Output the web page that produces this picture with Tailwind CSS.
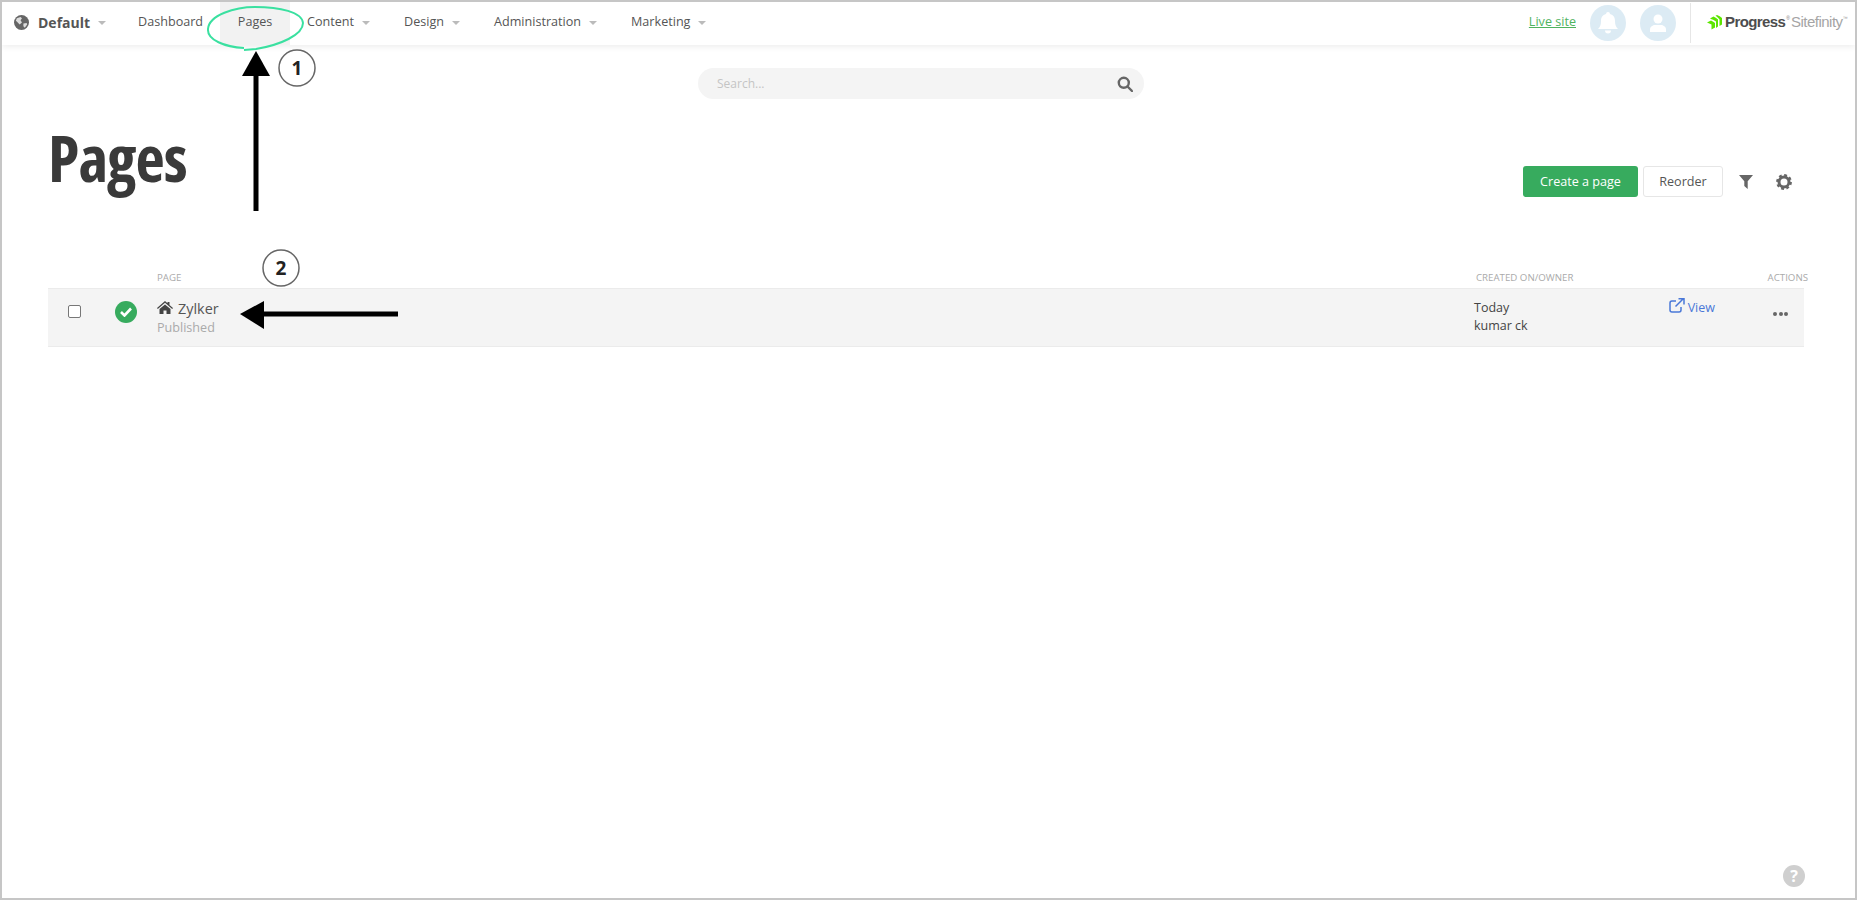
<!DOCTYPE html>
<html lang="en">
<head>
<meta charset="utf-8">
<title>Pages</title>
<script src="https://cdn.jsdelivr.net/npm/@tailwindcss/browser@4"></script>
</head>
<body class="bg-white font-['Open_Sans',sans-serif] text-[#555]">
<div class="relative w-[1857px] h-[900px] overflow-hidden border-2 border-[#c6c6c6] flex flex-col">

  <!-- top nav -->
  <nav class="h-[43px] shrink-0 flex items-center bg-white shadow-[0_2px_6px_rgba(0,0,0,0.07)] text-[12.6px] pl-3 pb-[2px]">
    <svg class="w-[15px] h-[15px]" viewBox="0 0 16 16"><circle cx="8" cy="8" r="8" fill="#666"/><path d="M3 3.500 7 2l1.500 1.500L7 5.500 8.500 8 6 10 3.500 7.500 2 6zM10 9l3.500-.5L14 10l-2.500 3.500L10 12z" fill="#ddd"/></svg>
    <span class="ml-[9px] font-bold text-[14px]">Default</span>
    <span class="ml-[8px] w-0 h-0 border-x-4 border-x-transparent border-t-[4px] border-t-[#bbb]"></span>
    <a class="ml-[32px]">Dashboard</a>
    <a class="ml-[17px] self-start h-[43px] pb-[2px] w-[70px] bg-[#f2f2f2] flex items-center justify-center">Pages</a>
    <a class="ml-[17px]">Content</a>
    <span class="ml-[8px] w-0 h-0 border-x-4 border-x-transparent border-t-[4px] border-t-[#bbb]"></span>
    <a class="ml-[34px]">Design</a>
    <span class="ml-[8px] w-0 h-0 border-x-4 border-x-transparent border-t-[4px] border-t-[#bbb]"></span>
    <a class="ml-[34px]">Administration</a>
    <span class="ml-[8px] w-0 h-0 border-x-4 border-x-transparent border-t-[4px] border-t-[#bbb]"></span>
    <a class="ml-[34px]">Marketing</a>
    <span class="ml-[8px] w-0 h-0 border-x-4 border-x-transparent border-t-[4px] border-t-[#bbb]"></span>

    <div class="ml-auto flex items-center h-full">
      <a class="text-[#4fb35f] underline">Live site</a>
      <span class="ml-[14px] w-[36px] h-[36px] rounded-full bg-[#dcebf4] flex items-center justify-center">
        <svg class="w-[20px] h-[22px]" viewBox="0 0 20 22" fill="#fff"><path d="M10 0a2 2 0 0 1 2 2c3.500.800 5 3.500 5 7 0 4 1 6 3 8H0c2-2 3-4 3-8 0-3.500 1.500-6.200 5-7a2 2 0 0 1 2-2zM7 18.500h6a3 3 0 0 1-6 0z"/></svg>
      </span>
      <span class="ml-[14px] w-[36px] h-[36px] rounded-full bg-[#dcebf4] flex items-center justify-center">
        <svg class="w-[20px] h-[18px]" viewBox="0 0 20 18" fill="#fff"><circle cx="10" cy="5" r="4.500"/><path d="M2 18v-2.500C2 12.500 5 11 7 11h6c2 0 5 1.500 5 4.500V18z"/></svg>
      </span>
      <span class="ml-[14px] w-px h-[40px] bg-[#e6e6e6]"></span>
      <span class="ml-[16px] mr-[13px] w-[135px] flex items-center font-['Liberation_Sans',sans-serif] whitespace-nowrap">
        <svg class="w-[15px] h-[16px] shrink-0" viewBox="0 0 15 16" fill="#5ce500"><path d="M0 7.500 4 5.500c1.500.800 3 1.700 4 2.500v4.500l-3.500 2V9.500L0 7.500zM3 3.500 6.500 1.500c2 1 3.500 2 4.500 3v7l-2 1.500V6.500C7.500 5.300 5 4.300 3 3.500zM8.500.800 10 0c2 .800 3.500 1.800 5 3v6.500L12.500 11V4.500C11.500 3 10 1.800 8.500.800z"/></svg>
        <span class="ml-[3px] text-[15px] font-bold tracking-[-0.6px] text-[#4d4d4d]">Progress</span>
        <span class="ml-[1px] mb-[7px] text-[5px] text-[#777]">®</span>
        <span class="ml-[1px] text-[15px] tracking-[-0.5px] text-[#a5a5a5] font-light">Sitefinity</span>
        <span class="mb-[7px] text-[5px] text-[#999]">™</span>
      </span>
    </div>
  </nav>

  <!-- search -->
  <div class="mt-[23px] ml-[696px] w-[446px] h-[31px] rounded-[16px] bg-[#f4f4f4] flex items-center justify-between pl-[19px] pr-[11px]">
    <span class="text-[12px] text-[#c4c4c4]">Search...</span>
    <svg class="w-[16px] h-[16px]" viewBox="0 0 16 16" fill="none" stroke="#666" stroke-width="2.400"><circle cx="6.800" cy="6.800" r="5"/><path d="M10.500 10.500 15 15" stroke-linecap="round"/></svg>
  </div>

  <!-- heading + actions -->
  <div class="mt-[17px] ml-[46px] mr-[63px] flex items-start justify-between h-[155px]">
    <h1 class="text-[64px] leading-[84px] font-bold text-[#3a3a3a] font-stretch-[62%] tracking-[-1px]">Pages</h1>
    <div class="mt-[50px] flex items-center">
      <button class="w-[115px] h-[31px] pt-[1px] rounded-[3px] bg-[#37ab5e] text-white text-[12.6px]">Create a page</button>
      <button class="ml-[5px] w-[80px] h-[31px] pt-[1px] rounded-[3px] bg-white border border-[#e6e6e6] text-[12.6px]">Reorder</button>
      <svg class="ml-[16px] w-[14px] h-[14px]" viewBox="0 0 14 14" fill="#666"><path d="M0 0h14L8.700 6.200V14L5.300 11V6.200z"/></svg>
      <svg class="ml-[23px] w-[16px] h-[16px]" viewBox="0 0 16 16"><circle cx="8" cy="8" r="5" fill="none" stroke="#666" stroke-width="3"/><circle cx="8" cy="8" r="6.700" fill="none" stroke="#666" stroke-width="2.400" stroke-dasharray="2.800 2.460"/></svg>
    </div>
  </div>

  <!-- table -->
  <div class="ml-[46px] w-[1756px] flex h-[17px] items-start text-[9.700px] uppercase text-[#aaa] relative">
    <span class="ml-[109px]">Page</span>
    <span class="absolute left-[1428px] top-0">Created on/owner</span>
    <span class="absolute right-[-4px] top-0">Actions</span>
  </div>
  <div class="ml-[46px] w-[1756px] h-[59px] bg-[#f4f4f4] border-y border-[#ebebeb] flex items-start relative">
    <span class="mt-[16px] ml-[20px] w-[13px] h-[13px] rounded-[2px] border border-[#777] bg-white"></span>
    <span class="mt-[12px] ml-[34px] w-[22px] h-[22px] rounded-full bg-[#37ab5e] flex items-center justify-center">
      <svg class="w-[12px] h-[10px]" viewBox="0 0 12 10" fill="none" stroke="#fff" stroke-width="2.600"><path d="M1 5l3.500 3.500L11 1.500"/></svg>
    </span>
    <div class="ml-[20px] mt-[10px]">
      <div class="flex items-center h-[20px]">
        <svg class="-mt-[3px] w-[16px] h-[13px]" viewBox="0 0 16 13" fill="#444"><path d="M8 0 10.500 2.200V1h2v3l3.500 3-.8.900L8 1.800.8 7.900 0 7zM2.500 8 8 3.400 13.500 8v5H9.500V9.500h-3V13h-4z"/></svg>
        <span class="ml-[5px] text-[14.400px]">Zylker</span>
      </div>
      <div class="text-[12.600px] leading-[18px] text-[#aaa]">Published</div>
    </div>
    <div class="ml-auto mr-[89px] mt-[10px] w-[241px] flex justify-between text-[12.500px] leading-[18px] text-[#444]">
      <div>Today<br>kumar ck</div>
      <div class="flex items-start text-[#4a78d8]">
        <svg class="mt-[-1px] w-[16px] h-[15px]" viewBox="0 0 16 15" fill="none" stroke="#4a78d8" stroke-width="1.500"><path d="M7 3H3a2 2 0 0 0-2 2v7a2 2 0 0 0 2 2h7a2 2 0 0 0 2-2V9M6.500 8.500 14 1M9.500.800H15V6.500"/></svg>
        <span class="ml-[3px]">View</span>
      </div>
    </div>
    <div class="absolute left-[1725px] top-[23px] flex gap-[1.500px]">
      <span class="w-[4px] h-[4px] rounded-full bg-[#666]"></span>
      <span class="w-[4px] h-[4px] rounded-full bg-[#666]"></span>
      <span class="w-[4px] h-[4px] rounded-full bg-[#666]"></span>
    </div>
  </div>

  <!-- help -->
  <span class="absolute left-[1781px] top-[863px] w-[22px] h-[22px] rounded-full bg-[#cfcfcf] text-white font-bold text-[16px] leading-[22px] text-center">?</span>

  <!-- annotations over the screenshot -->
  <svg class="absolute left-[-2px] top-[-2px]" width="1857" height="900" viewBox="0 0 1857 900" fill="none">
    <path d="M244 48C225 47 207 40 208 29 209 15 235 7 255 7 280 7 302 12 303 23 303 35 280 45 256 49L244 50" stroke="#3ae0a0" stroke-width="2"/>
    <path d="M256 211V70" stroke="#000" stroke-width="5"/>
    <path d="M256 51 270 76H242z" fill="#000"/>
    <path d="M398 314H260" stroke="#000" stroke-width="5"/>
    <path d="M240 314 264 301V329z" fill="#000"/>
    <circle cx="297" cy="68" r="18" fill="#fff" stroke="#666" stroke-width="1.500"/>
    <circle cx="281" cy="268" r="18" fill="#fff" stroke="#666" stroke-width="1.500"/>
    <text x="297" y="75" text-anchor="middle" font-family="Open Sans" font-weight="700" font-size="19" fill="#222">1</text>
    <text x="281" y="275" text-anchor="middle" font-family="Open Sans" font-weight="700" font-size="19" fill="#222">2</text>
  </svg>
</div>
</body>
</html>
